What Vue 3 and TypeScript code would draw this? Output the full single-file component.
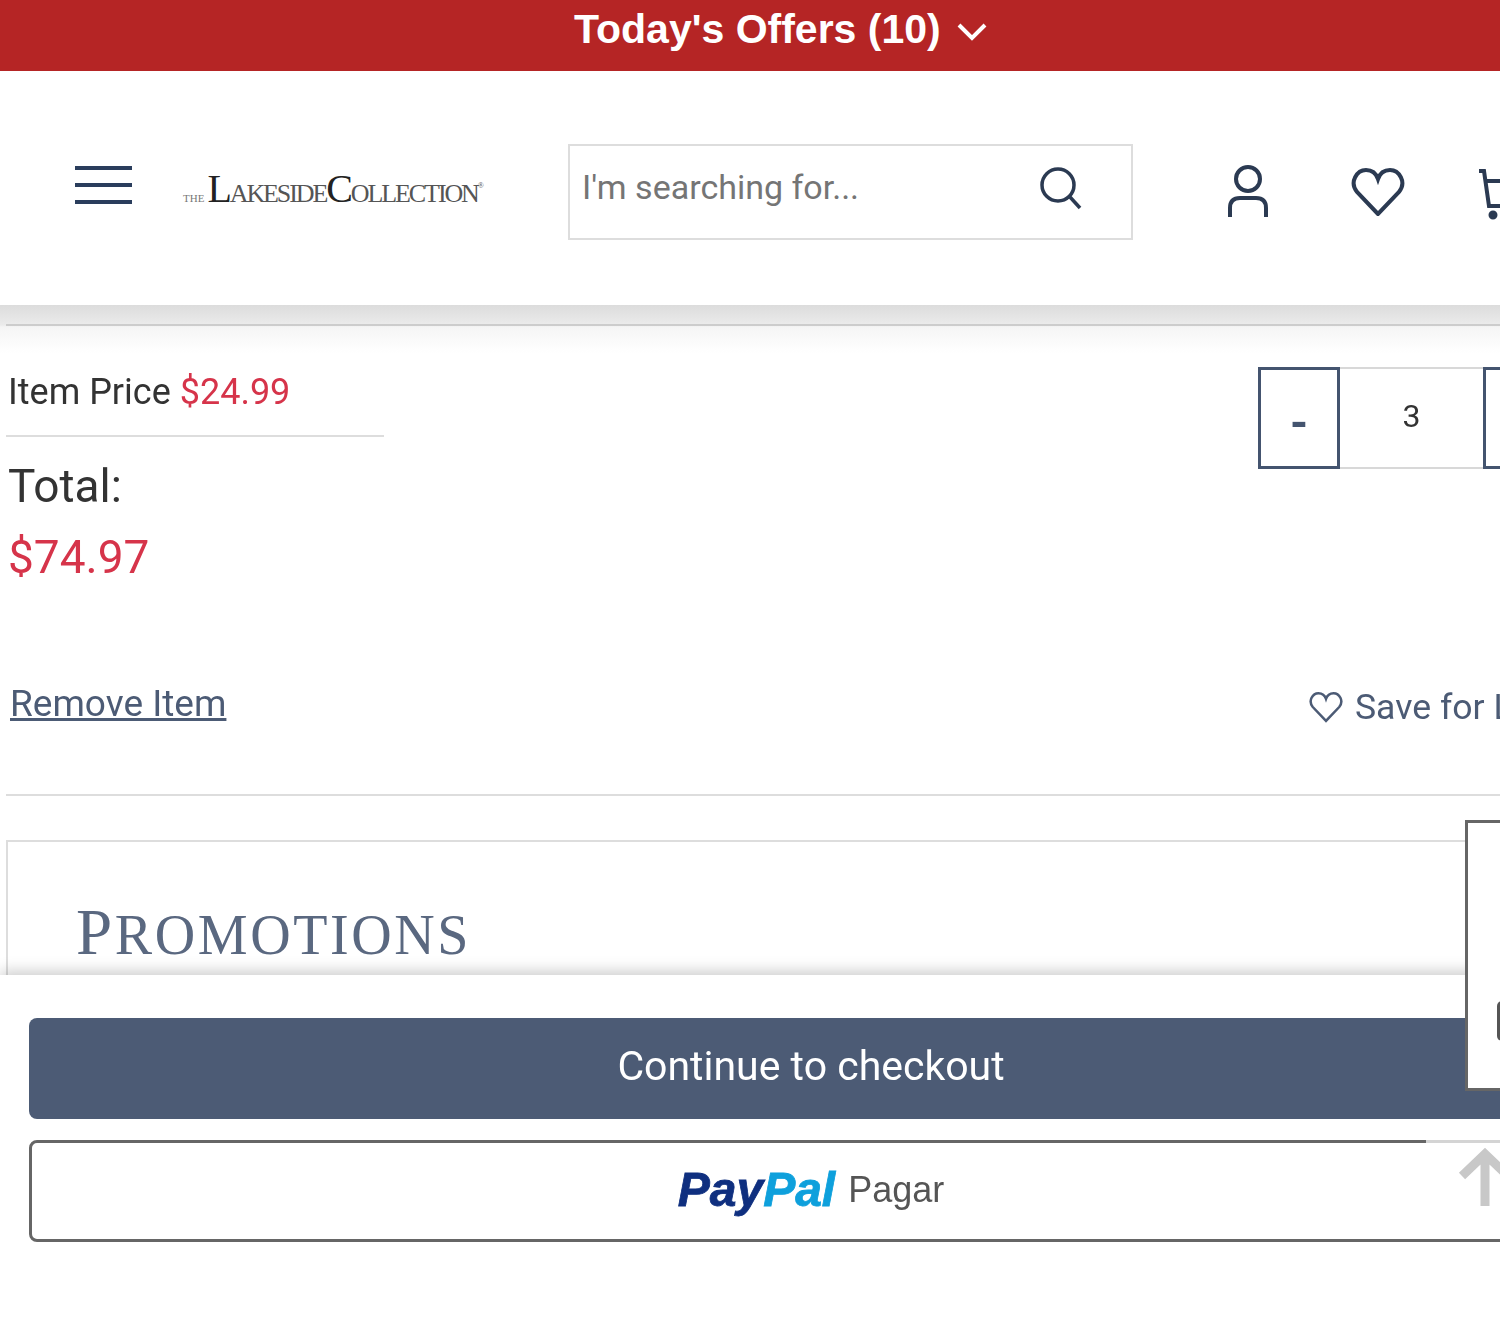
<script setup lang="ts">
const itemPrice = "$24.99";
const total = "$74.97";
const quantity = 3;
</script>

<template>
  <div class="viewport">
    <div class="page">
      <div class="offers">
        <span>Today's Offers (10)</span>
        <svg class="chevron" width="30" height="20" viewBox="0 0 30 20">
          <path d="M2 3 L15 16 L28 3" />
        </svg>
      </div>

      <header class="header">
        <div class="burger"><i /><i /><i /></div>
        <div class="logo">
          <span class="logo-the">THE</span><span class="logo-big">L</span>AKESIDE<span class="logo-big">C</span>OLLECTION<sup>®</sup>
        </div>
        <div class="search">
          <input class="search-input" placeholder="I'm searching for..." />
          <svg class="icon search-icon" width="44" height="44" viewBox="0 0 44 44">
            <circle cx="19" cy="18" r="16" />
            <path d="M31 30 L41 41" />
          </svg>
        </div>
        <svg class="icon user" width="44" height="54" viewBox="0 0 44 54">
          <circle cx="22" cy="14" r="12" />
          <path d="M4 52 V43 Q4 33 14 33 H30 Q40 33 40 43 V52" />
        </svg>
        <svg class="icon heart" width="54" height="48" viewBox="0 0 54 48">
          <path d="M27 46 L6 24 C-2 14 6 2 15 2 C21 2 25 5 27 11 C29 5 33 2 39 2 C48 2 56 14 48 24 Z" />
        </svg>
        <svg class="icon cart" width="60" height="54" viewBox="0 0 60 54">
          <path d="M2 3 H7 L12 38 H50 M9 13 H60" />
          <circle cx="16" cy="47" r="3" class="dot" />
        </svg>
      </header>

      <main class="main">
        <div class="item">
          <div class="item-top">
            <div class="prices">
              <div class="price-line">Item Price <span class="red">{{ itemPrice }}</span></div>
              <div class="total-label">Total:</div>
              <div class="total red">{{ total }}</div>
            </div>
            <div class="qty">
              <button class="qty-btn">-</button>
              <div class="qty-value">{{ quantity }}</div>
              <button class="qty-btn">+</button>
            </div>
          </div>
          <div class="actions">
            <a class="remove">Remove Item</a>
            <a class="save">
              <svg class="save-heart" width="34" height="32" viewBox="0 0 54 48">
                <path d="M27 46 L6 24 C-2 14 6 2 15 2 C21 2 25 5 27 11 C29 5 33 2 39 2 C48 2 56 14 48 24 Z" />
              </svg>
              Save for Later
            </a>
          </div>
        </div>
        <section class="promos">
          <h2 class="promos-title">PROMOTIONS</h2>
        </section>
      </main>

      <footer class="footer">
        <button class="checkout">Continue to checkout</button>
        <button class="paypal">
          <span class="pp"><span class="pp-dark">Pay</span><span class="pp-light">Pal</span></span>
          <span class="pagar">Pagar</span>
        </button>
      </footer>
    </div>

    <div class="popup"><i class="popup-mark" /></div>
    <svg class="to-top" width="50" height="62" viewBox="0 0 50 62">
      <path d="M27 58 V6 M4 28 L27 6 L50 28" />
    </svg>
  </div>
</template>

<style>
html,
body {
  margin: 0;
  overflow: hidden;
  background: #fff;
}
</style>

<style scoped>
.viewport {
  position: relative;
  width: 1500px;
  height: 1343px;
  overflow: hidden;
  filter: blur(0.6px);
}

.page {
  display: flex;
  flex-direction: column;
  width: 1622px;
  height: 1343px;
  font-family: Roboto, "Liberation Sans", sans-serif;
  color: #333;
}

.offers {
  display: flex;
  align-items: center;
  gap: 16px;
  box-sizing: border-box;
  height: 71px;
  padding: 0 0 12px 574px;
  flex-shrink: 0;
  background: #b52525;
  color: #fff;
  font-family: "Liberation Sans", sans-serif;
  font-size: 41px;
  font-weight: 700;
}

.chevron {
  margin-top: 4px;
  fill: none;
  stroke: #fff;
  stroke-width: 4;
}

.header {
  position: relative;
  z-index: 1;
  display: flex;
  align-items: flex-start;
  box-sizing: border-box;
  height: 234px;
  flex-shrink: 0;
  padding: 73px 0 0 75px;
  background: #fff;
}

.burger {
  display: flex;
  flex-direction: column;
  gap: 13px;
  width: 57px;
  margin-top: 22px;
}

.burger i {
  display: block;
  height: 4px;
  background: #2a3d5c;
}

.logo {
  width: 304px;
  margin: 26px 0 0 51px;
  font-family: "Liberation Serif", serif;
  font-size: 26px;
  line-height: 38px;
  color: #555;
  white-space: nowrap;
  letter-spacing: -2.1px;
}

.logo-the {
  font-size: 11px;
  margin-right: 3px;
  color: #777;
  letter-spacing: 0;
}

.logo-big {
  font-size: 40px;
  color: #222;
}

.logo sup {
  font-size: 8px;
  line-height: 0;
  vertical-align: 14px;
}

.search {
  display: flex;
  align-items: center;
  box-sizing: border-box;
  width: 565px;
  height: 96px;
  margin-left: 81px;
  padding: 0 50px 10px 12px;
  border: 2px solid #ddd;
}

.search-input {
  flex: 1;
  min-width: 0;
  border: 0;
  outline: 0;
  padding: 0;
  font-family: inherit;
  font-size: 34px;
}

.search-input::placeholder {
  color: #757575;
  opacity: 1;
}

.icon {
  flex-shrink: 0;
  fill: none;
  stroke: #2b3a52;
  stroke-width: 4;
}

.search-icon {
  stroke-width: 3.5;
  margin: 4px -2px 0 0;
}

.user {
  margin: 21px 0 0 93px;
}

.heart {
  margin: 24px 0 0 81px;
}

.cart {
  margin: 24px 0 0 72px;
}

.cart .dot {
  fill: #2b3a52;
  stroke-width: 3;
}

.main {
  flex: 1;
  min-height: 0;
  overflow: hidden;
  padding-left: 6px;
  background: linear-gradient(#dcdcdc, #ebebeb 20px, #f5f5f5 22px, #fff 48px) no-repeat;
  background-size: 100% 50px;
}

.item {
  margin-top: 19px;
  padding-top: 41px;
  border-top: 2px solid #ccc;
  border-bottom: 2px solid #ddd;
}

.item-top {
  display: flex;
  justify-content: space-between;
  align-items: flex-start;
  padding-right: 57px;
}

.prices {
  width: 378px;
}

.price-line {
  box-sizing: border-box;
  height: 68px;
  padding: 1px 0 0 2px;
  border-bottom: 2px solid #ddd;
  font-size: 36px;
  line-height: 44px;
  margin-top: 2px;
}

.red {
  color: #d6344a;
}

.total-label {
  margin-top: 18px;
  padding-left: 2px;
  font-size: 46px;
  line-height: 62px;
}

.total {
  padding-left: 2px;
  font-size: 46px;
  line-height: 80px;
}

.qty {
  display: flex;
}

.qty-btn {
  box-sizing: border-box;
  width: 82px;
  height: 102px;
  padding: 10px 0 0;
  border: 3px solid #44546f;
  background: #fff;
  color: #44546f;
  font-family: inherit;
  font-size: 46px;
  font-weight: 700;
}

.qty-value {
  box-sizing: border-box;
  width: 143px;
  height: 102px;
  border-top: 2px solid #d8d8d8;
  border-bottom: 2px solid #d8d8d8;
  text-align: center;
  font-size: 32px;
  line-height: 94px;
}

.actions {
  display: flex;
  justify-content: space-between;
  align-items: flex-start;
  margin-top: 84px;
  padding: 0 0 64px 4px;
}

.remove {
  font-size: 37px;
  line-height: 46px;
  color: #4c5b75;
  text-decoration: underline;
}

.save {
  display: flex;
  align-items: center;
  gap: 12px;
  margin: 3px -6px 0 0;
  font-size: 35.6px;
  line-height: 46px;
  color: #4c5b75;
  width: 319px;
}

.save-heart {
  fill: none;
  stroke: #4c5b75;
  stroke-width: 4;
}

.promos {
  margin-top: 44px;
  height: 300px;
  border: 2px solid #ddd;
  padding: 52px 0 0 68px;
}

.promos-title {
  margin: 0;
  font-family: "Liberation Serif", serif;
  font-size: 56px;
  font-weight: 400;
  line-height: 76px;
  letter-spacing: 2.6px;
  color: #5a6880;
}

.promos-title::first-letter {
  font-size: 65px;
}

.footer {
  position: relative;
  z-index: 1;
  box-sizing: border-box;
  height: 368px;
  flex-shrink: 0;
  padding: 43px 29px 0;
  background: #fff;
  box-shadow: 0 -4px 14px rgba(0, 0, 0, 0.2);
}

.checkout {
  display: block;
  width: 100%;
  height: 101px;
  padding-bottom: 6px;
  border: 0;
  border-radius: 8px;
  background: #4c5b75;
  color: #fff;
  font-family: inherit;
  font-size: 41px;
}

.paypal {
  position: relative;
  display: flex;
  align-items: center;
  justify-content: center;
  gap: 13px;
  width: 100%;
  height: 102px;
  margin-top: 21px;
  padding-bottom: 4px;
  border: 3px solid #666;
  border-radius: 8px;
  background: #fff;
}

.paypal::before {
  content: "";
  position: absolute;
  top: -3px;
  left: 1394px;
  right: 0;
  height: 3px;
  background: #d4d4d4;
}

.pp {
  font-family: "Liberation Sans", sans-serif;
  font-size: 48px;
  font-weight: 700;
  font-style: italic;
  -webkit-text-stroke: 0.8px;
}

.pp-dark {
  color: #0f2f7f;
}

.pp-light {
  color: #0ea0dc;
}

.pagar {
  font-family: inherit;
  font-size: 36px;
  color: #555;
}

.popup {
  position: absolute;
  z-index: 2;
  left: 1465px;
  top: 820px;
  box-sizing: border-box;
  width: 60px;
  height: 271px;
  background: #fff;
  border: 3px solid #666;
}

.popup-mark {
  position: absolute;
  left: 29px;
  top: 178px;
  width: 10px;
  height: 40px;
  border-radius: 5px;
  background: #555;
}

.to-top {
  position: absolute;
  z-index: 2;
  left: 1458px;
  top: 1148px;
  fill: none;
  stroke: #c8c8c8;
  stroke-width: 9;
}
</style>
